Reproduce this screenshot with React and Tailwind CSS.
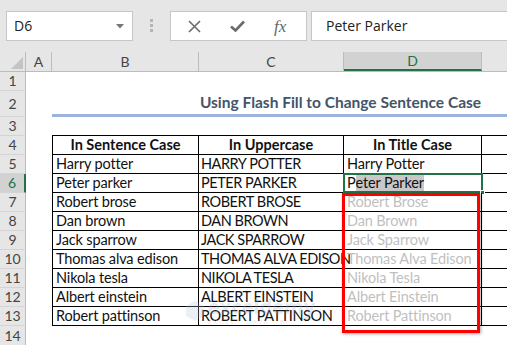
import React from "react";

const rows = [
    ["Harry potter", "HARRY POTTER", "Harry Potter"],
    ["Peter parker", "PETER PARKER", "Peter Parker"],
    ["Robert brose", "ROBERT BROSE", "Robert Brose"],
    ["Dan brown", "DAN BROWN", "Dan Brown"],
    ["Jack sparrow", "JACK SPARROW", "Jack Sparrow"],
    ["Thomas alva edison", "THOMAS ALVA EDISON", "Thomas Alva Edison"],
    ["Nikola tesla", "NIKOLA TESLA", "Nikola Tesla"],
    ["Albert einstein", "ALBERT EINSTEIN", "Albert Einstein"],
    ["Robert pattinson", "ROBERT PATTINSON", "Robert Pattinson"],
];

function RowHead({ n, active }) {
    return (
        <div
            className={`w-[26px] shrink-0 h-full flex items-center justify-center border-b border-[#d4d4d4] text-[14px] ${
                active ? "bg-[#d2d2d2] border-r-2 border-r-[#217346] text-[#217346]" : "bg-[#e6e6e6] border-r border-r-[#bcbcbc] text-[#444]"
            }`}
        >
            {n}
        </div>
    );
}

export default function App() {
    return (
        <div className="relative w-[507px] h-[345px] overflow-hidden bg-white font-['Lato',sans-serif] text-[#111] leading-none">
            {/* formula bar */}
            <div className="h-[52px] bg-[#e6e6e6] flex items-start pt-[11px] font-['Open_Sans',sans-serif]">
                <div className="ml-[6px] w-[127px] h-[30px] bg-white border border-[#c6c6c6] flex items-center justify-between pl-[7px] pr-[8px] text-[14px] text-[#222]">
                    <span>D6</span>
                    <svg width="8" height="5" viewBox="0 0 8 5"><path d="M0 0h8L4 4.5z" fill="#777" /></svg>
                </div>
                <div className="ml-[17px] mt-[8px] flex flex-col gap-[2px]">
                    <div className="w-[3px] h-[3px] bg-[#b5b5b5]" />
                    <div className="w-[3px] h-[3px] bg-[#b5b5b5]" />
                    <div className="w-[3px] h-[3px] bg-[#b5b5b5]" />
                </div>
                <div className="ml-[17px] w-[137px] h-[30px] bg-white border border-[#c6c6c6] flex items-center">
                    <svg className="ml-[17px]" width="13" height="13" viewBox="0 0 13 13">
                        <path d="M1 1l11 11M12 1L1 12" stroke="#6b6b6b" strokeWidth="1.6" />
                    </svg>
                    <svg className="ml-[29px]" width="15" height="12" viewBox="0 0 15 12">
                        <path d="M1 6.5l4.5 4L14 1.5" stroke="#6b6b6b" strokeWidth="2.6" fill="none" />
                    </svg>
                    <span className="ml-[29px] font-['Liberation_Serif',serif] italic text-[17px] text-[#666] leading-none">fx</span>
                </div>
                <div className="ml-[4px] flex-1 h-[30px] bg-white border border-[#c6c6c6] border-r-0 flex items-center pl-[14px] text-[14px] text-[#222]">
                    Peter Parker
                </div>
            </div>

            {/* column headers */}
            <div className="flex h-[20px] bg-[#e6e6e6] border-b border-[#bcbcbc] text-[14px] text-[#444]">
                <div className="w-[26px] border-r border-[#bcbcbc] relative">
                    <svg className="absolute right-[2px] bottom-[2px]" width="12" height="12" viewBox="0 0 12 12"><path d="M12 0v12H0z" fill="#c4c4c4" /></svg>
                </div>
                <div className="w-[26px] border-r border-[#bcbcbc] flex items-center justify-center">A</div>
                <div className="w-[147px] border-r border-[#bcbcbc] flex items-center justify-center">B</div>
                <div className="w-[145px] border-r border-[#bcbcbc] flex items-center justify-center">C</div>
                <div className="w-[138px] border-r border-[#bcbcbc] bg-[#d2d2d2] border-b-2 border-b-[#217346] flex items-center justify-center text-[#217346]">D</div>
                <div className="flex-1" />
            </div>

            {/* row 1 */}
            <div className="flex h-[19px]">
                <RowHead n={1} />
            </div>
            {/* row 2 title */}
            <div className="flex h-[26px]">
                <RowHead n={2} />
                <div className="w-[26px]" />
                <div className="flex-1 flex items-center border-b-[3px] border-[#9db3dd]">
                    <div className="w-[147px]" />
                    <div className="w-[283px] text-center font-bold text-[15.5px] text-[#44546a] whitespace-nowrap">
                        Using Flash Fill to Change Sentence Case
                    </div>
                </div>
            </div>
            {/* row 3 */}
            <div className="flex h-[19px]">
                <RowHead n={3} />
                <div className="w-[26px]" />
                <div className="flex-1 border-b border-black" />
            </div>
            {/* row 4 header */}
            <div className="flex h-[19px] text-[14.5px]">
                <RowHead n={4} />
                <div className="w-[26px]" />
                <div className="w-[147px] border-l border-r border-b border-black flex items-center justify-center font-bold">In Sentence Case</div>
                <div className="w-[145px] border-r border-b border-black flex items-center justify-center font-bold">In Uppercase</div>
                <div className="w-[138px] border-r border-b border-black flex items-center justify-center font-bold">In Title Case</div>
                <div className="flex-1 border-b border-black" />
            </div>
            {rows.map((r, i) => (
                <div key={i} className="flex h-[19px] text-[14.5px] tracking-[-0.15px]">
                    <RowHead n={i + 5} active={i === 1} />
                    <div className="w-[26px]" />
                    <div className="w-[147px] border-l border-r border-b border-black flex items-center pl-[3px] whitespace-nowrap">{r[0]}</div>
                    <div className="w-[145px] border-r border-b border-black flex items-center pl-[2px] whitespace-nowrap tracking-[-0.45px]">{r[1]}</div>
                    <div className="relative w-[138px] border-r border-b border-black flex items-center pl-[3px] whitespace-nowrap">
                        {i === 0 && <span>{r[2]}</span>}
                        {i === 1 && (
                            <>
                                <span>P</span>
                                <span className="bg-[#c8c8c8] py-[2px]">eter Parker</span>
                                <div className="absolute -left-[1px] -top-[1px] -right-[2px] -bottom-[1px] border-2 border-[#217346]" />
                                <div className="absolute -right-[4px] -bottom-[3px] w-[5px] h-[5px] bg-[#217346] border border-white" />
                            </>
                        )}
                        {i > 1 && <span className="text-[#bfbfbf]">{r[2]}</span>}
                    </div>
                    <div className="flex-1 border-b border-black" />
                </div>
            ))}
            <div className="flex h-[20px]">
                <RowHead n={14} />
            </div>

            {/* watermark */}
            <div className="absolute left-[186px] top-[297px] flex items-center gap-[4px] opacity-25 pointer-events-none">
                <svg width="18" height="20" viewBox="0 0 18 20"><path d="M9 0l9 5v10l-9 5-9-5V5z" fill="#b7c3dc" /></svg>
                <div className="flex flex-col">
                    <span className="font-['Open_Sans',sans-serif] font-bold text-[20px] text-[#9fb0d2]">exceldemy</span>
                    <span className="text-[6px] tracking-[2px] text-[#9aa4b8] mt-[2px]">EXCEL · DATA · BI</span>
                </div>
            </div>

            {/* red highlight */}
            <div className="absolute left-[342px] top-[193px] w-[138px] h-[140px] border-[3px] border-[#ff0000] shadow-[1px_1px_3px_rgba(0,0,0,0.35)]" />
        </div>
    );
}
